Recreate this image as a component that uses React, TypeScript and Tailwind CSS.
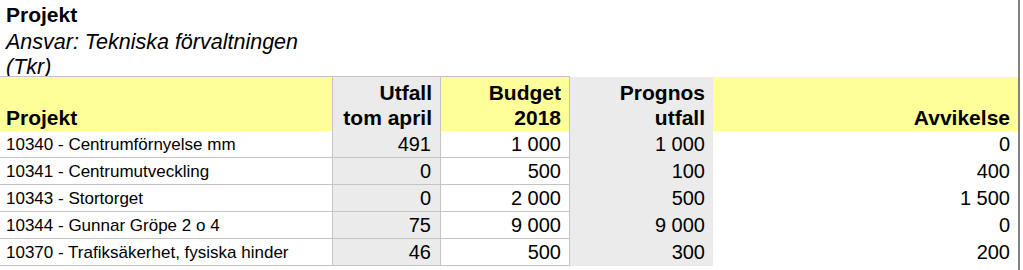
type Row = {
  name: string;
  utfall: string;
  budget: string;
  prognos: string;
  avvikelse: string;
};

const rows: Row[] = [
  { name: "10340 - Centrumförnyelse mm", utfall: "491", budget: "1 000", prognos: "1 000", avvikelse: "0" },
  { name: "10341 - Centrumutveckling", utfall: "0", budget: "500", prognos: "100", avvikelse: "400" },
  { name: "10343 - Stortorget", utfall: "0", budget: "2 000", prognos: "500", avvikelse: "1 500" },
  { name: "10344 - Gunnar Gröpe 2 o 4", utfall: "75", budget: "9 000", prognos: "9 000", avvikelse: "0" },
  { name: "10370 - Trafiksäkerhet, fysiska hinder", utfall: "46", budget: "500", prognos: "300", avvikelse: "200" },
];

const App = () => {
  return (
    <div className="w-[1023px] h-[270px] overflow-hidden bg-white text-black font-['Liberation_Sans',Arial,sans-serif] flex">
      {/* SHEET */}
      <div className="w-[1018px] flex flex-col">
        {/* TITLE */}
        <div className="h-[76px] pl-[6px] pt-[2px] text-[21px]">
          <div className="font-bold leading-[26px]">Projekt</div>
          <div className="italic text-[21.5px] leading-[28px]">Ansvar: Tekniska förvaltningen</div>
          <div className="italic text-[21.5px] leading-[22px]">(Tkr)</div>
        </div>

        {/* HEADER */}
        <div className="flex h-[55px] text-[21px] leading-[25px] font-bold">
          <div className="w-[332px] bg-[#ffff99] border-t border-[#c4c4c4] flex items-end pl-[6px] pb-[1px]">
            Projekt
          </div>
          <div className="w-[108px] bg-[#ebebeb] border-t border-l border-[#c4c4c4] flex flex-col justify-end items-end pr-[8px] pb-[1px]">
            <span>Utfall</span>
            <span>tom april</span>
          </div>
          <div className="w-[130px] bg-[#ffff99] border-t border-l border-r border-[#c4c4c4] flex flex-col justify-end items-end pr-[8px] pb-[1px]">
            <span>Budget</span>
            <span>2018</span>
          </div>
          <div className="w-[143px] bg-[#ebebeb] mt-px flex flex-col justify-end items-end pr-[8px] pb-[1px]">
            <span>Prognos</span>
            <span>utfall</span>
          </div>
          <div className="flex-1 bg-[#ffff99] mt-px flex items-end justify-end pr-[8px] pb-[1px]">
            Avvikelse
          </div>
        </div>

        {/* ROWS */}
        {rows.map((r) => (
          <div key={r.name} className="flex h-[27px] text-[20px] leading-[25px]">
            <div className="w-[332px] border-b border-[#c4c4c4] pl-[6px] pt-px whitespace-nowrap text-[17px]">{r.name}</div>
            <div className="w-[108px] bg-[#ebebeb] border-b border-l border-[#c4c4c4] text-right pr-[9px] pt-px">{r.utfall}</div>
            <div className="w-[130px] border-b border-l border-r border-[#c4c4c4] text-right pr-[8px] pt-px">{r.budget}</div>
            <div className="w-[143px] bg-[#ebebeb] text-right pr-[8px] pt-px">{r.prognos}</div>
            <div className="flex-1 text-right pr-[8px] pt-px">{r.avvikelse}</div>
          </div>
        ))}
      </div>
      <div className="w-[2px] bg-[#808080]" />
    </div>
  );
};

export default App;
